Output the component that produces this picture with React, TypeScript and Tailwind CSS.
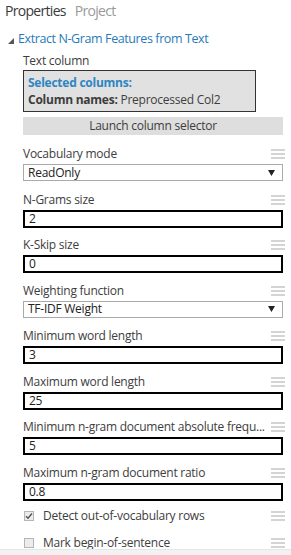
import React from 'react';

type Field =
  | { kind: 'select'; label: string; value: string }
  | { kind: 'input'; label: string; value: string };

const fields: Field[] = [
  { kind: 'select', label: 'Vocabulary mode', value: 'ReadOnly' },
  { kind: 'input', label: 'N-Grams size', value: '2' },
  { kind: 'input', label: 'K-Skip size', value: '0' },
  { kind: 'select', label: 'Weighting function', value: 'TF-IDF Weight' },
  { kind: 'input', label: 'Minimum word length', value: '3' },
  { kind: 'input', label: 'Maximum word length', value: '25' },
  { kind: 'input', label: 'Minimum n-gram document absolute frequ...', value: '5' },
  { kind: 'input', label: 'Maximum n-gram document ratio', value: '0.8' },
];

// 右侧的拖动图标
const Grip = () => (
  <div className="flex flex-col gap-[2px] w-[14px]">
    <div className="h-[2px] bg-[#d4d4d4]" />
    <div className="h-[2px] bg-[#d4d4d4]" />
    <div className="h-[2px] bg-[#d4d4d4]" />
  </div>
);

const CheckBox = ({ checked }: { checked: boolean }) => (
  <div className="w-[10px] h-[10px] border border-[#b5b5b5] bg-[#ececec] flex items-center justify-center">
    {checked && (
      <svg width="8" height="8" viewBox="0 0 8 8">
        <path d="M1 4.2 L3 6.2 L7 1.5" stroke="#555" strokeWidth="1.4" fill="none" />
      </svg>
    )}
  </div>
);

export default function App() {
  return (
    <div className="w-[291px] h-[555px] overflow-hidden bg-white relative font-['Segoe_UI','Open_Sans',sans-serif] text-[#3d3d3d]">
      {/* 标签页 */}
      <div className="flex gap-[9px] pl-[5px] pt-[1px] h-[22px] text-[14px] leading-[20px] tracking-[-0.7px]">
        <span className="text-[#3a3a3a]">Properties</span>
        <span className="text-[#9a9a9a]">Project</span>
      </div>

      {/* 模块标题 */}
      <div className="flex items-center gap-[4px] pl-[8px] mt-[8px] h-[18px]">
        <svg width="6" height="6" viewBox="0 0 6 6" className="mt-[4px]">
          <path d="M6 0 L6 6 L0 6 Z" fill="#555" />
        </svg>
        <span className="text-[12.5px] text-[#2a7ab8] tracking-[-0.4px]">Extract N-Gram Features from Text</span>
      </div>

      <div className="pl-[23px] pr-[6px] text-[12px] tracking-[-0.25px]">
        <div className="mt-[5px] h-[16px] leading-[16px]">Text column</div>
        <div className="w-[233px] h-[42px] mt-[1px] border border-[#333] bg-[#e1e1e1] px-[4px] pt-[3px] leading-[17px]">
          <div className="font-bold text-[#2e86c1]">Selected columns:</div>
          <div>
            <span className="font-bold">Column names:</span> Preprocessed Col2
          </div>
        </div>
        <div className="w-[260px] h-[18px] mt-[5px] bg-[#dedede] text-center leading-[18px]">
          Launch column selector
        </div>

        <div className="mt-[11px] flex flex-col">
          {fields.map((f) => (
            <div key={f.label} className="flex flex-col h-[45.5px]">
              <div className="flex items-center justify-between h-[16px] leading-[16px] w-[262px]">
                <span className="whitespace-nowrap">{f.label}</span>
                <Grip />
              </div>
              {f.kind === 'select' ? (
                <div className="w-[260px] h-[17px] mt-[2px] border border-[#aaa] flex items-center justify-between pl-[4px] pr-[7px]">
                  <span className="text-[#222]">{f.value}</span>
                  <svg width="7" height="6" viewBox="0 0 7 6">
                    <path d="M0 0 L7 0 L3.5 6 Z" fill="#222" />
                  </svg>
                </div>
              ) : (
                <div className="w-[260px] h-[18px] mt-[2px] border-2 border-black flex items-center pl-[4px] text-[#222]">
                  {f.value}
                </div>
              )}
            </div>
          ))}
          <div className="flex items-center justify-between w-[262px] h-[26px] -mt-[7px]">
            <div className="flex items-center gap-[9px] pl-[1px]">
              <CheckBox checked />
              <span>Detect out-of-vocabulary rows</span>
            </div>
            <Grip />
          </div>
          <div className="flex items-center justify-between w-[262px] h-[26px] mt-[1px]">
            <div className="flex items-center gap-[9px] pl-[1px]">
              <CheckBox checked={false} />
              <span>Mark begin-of-sentence</span>
            </div>
            <Grip />
          </div>
        </div>
      </div>

      {/* 底部条 */}
      <div className="absolute left-0 right-0 bottom-0 h-[6px] bg-[#f2f2f2] border-t border-[#e6e6e6]" />
    </div>
  );
}
